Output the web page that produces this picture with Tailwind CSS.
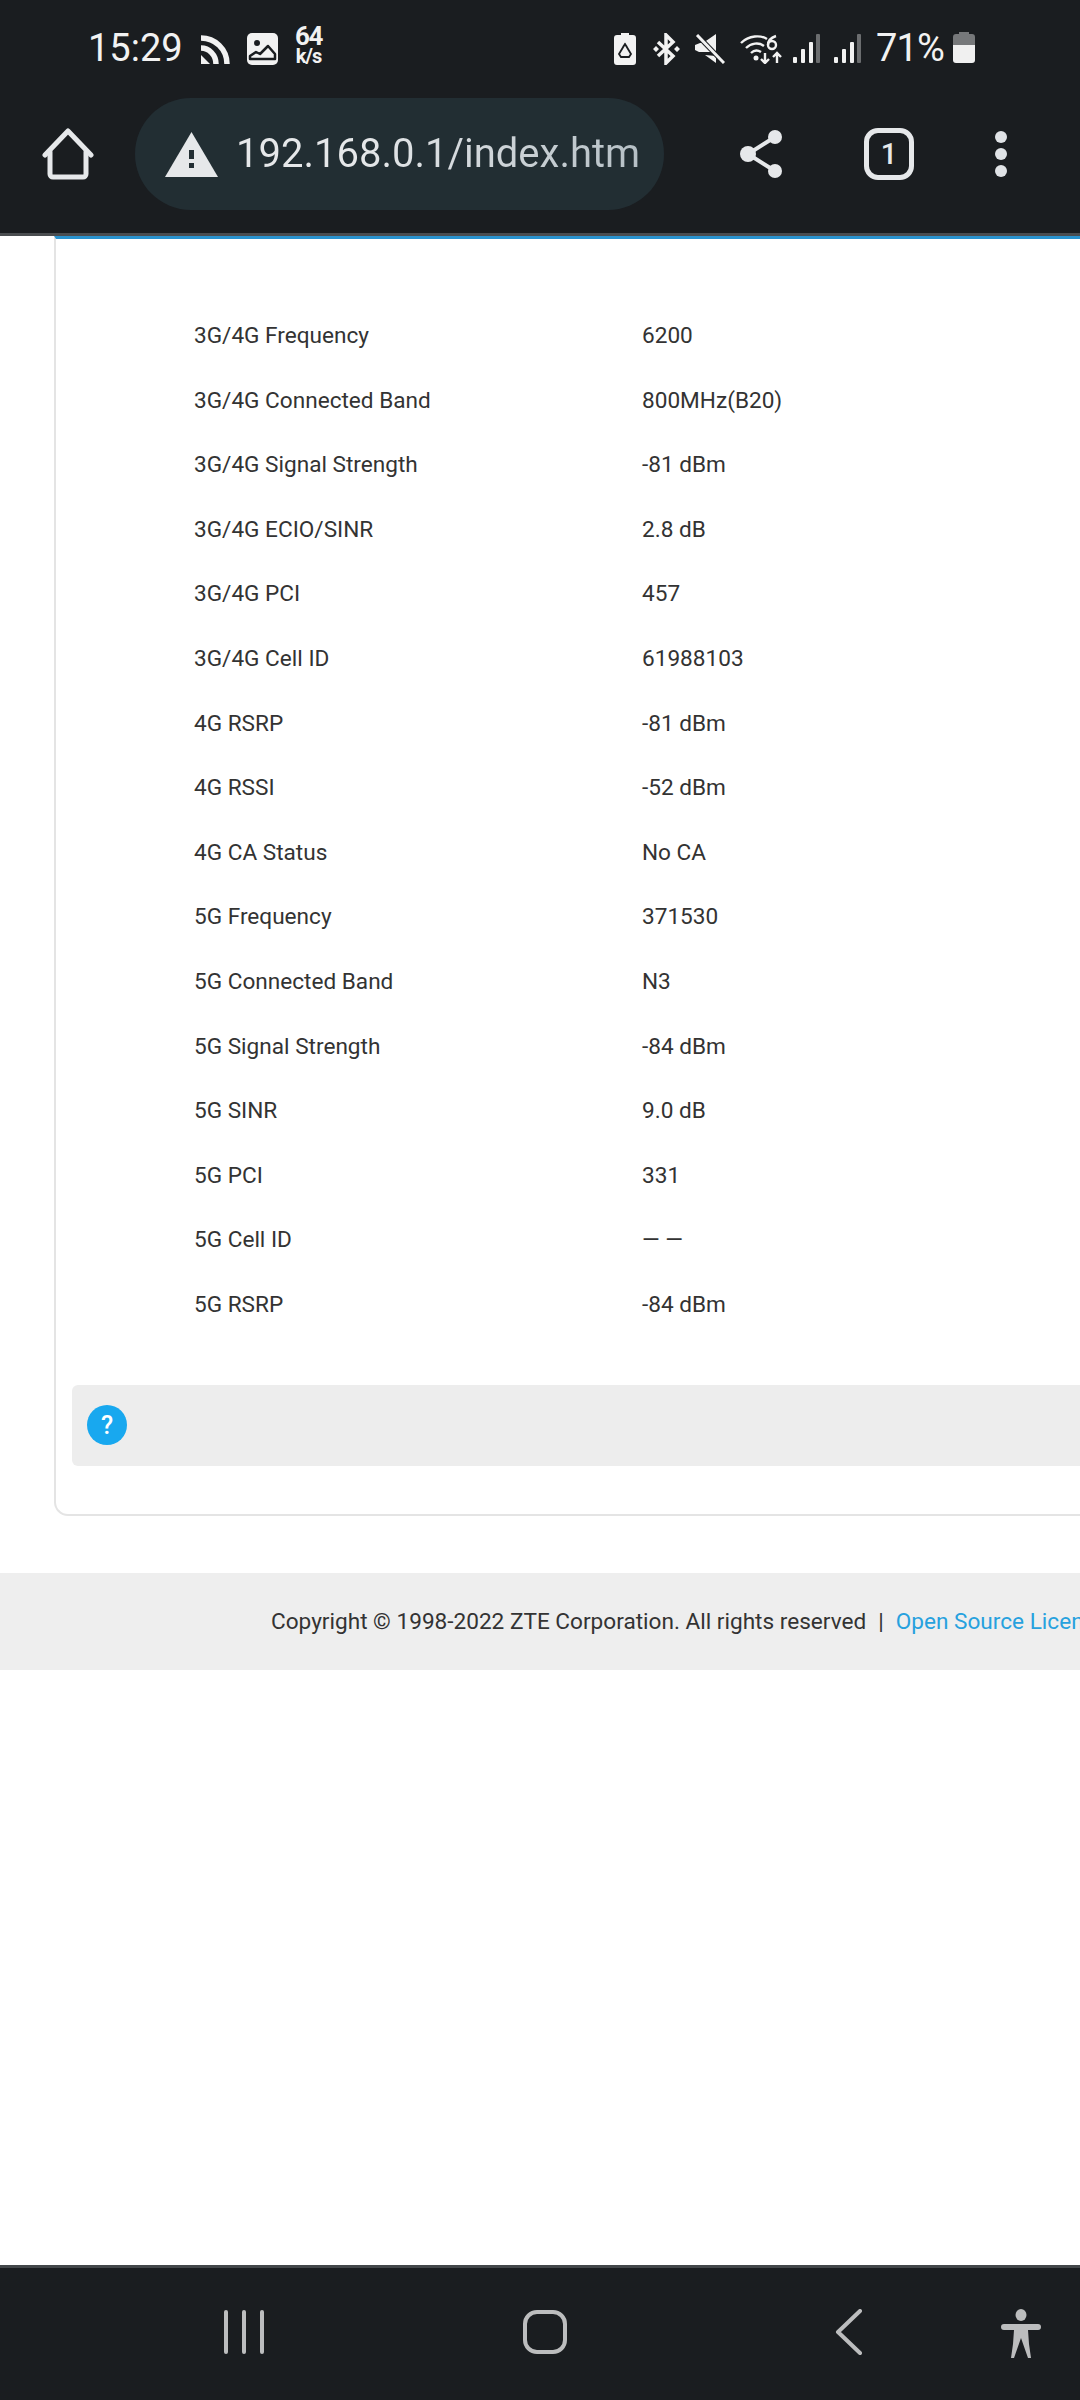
<!DOCTYPE html>
<html lang="en">
<head>
<meta charset="UTF-8">
<title>192.168.0.1</title>
<script src="https://cdn.jsdelivr.net/npm/@tailwindcss/browser@4"></script>
</head>
<body class="bg-white font-['Roboto',sans-serif] overflow-hidden">
<div class="w-[1080px] h-[2400px] flex flex-col overflow-hidden">

  <!-- status bar + browser toolbar -->
  <header class="h-[233px] shrink-0 bg-[#1a1d20] text-white">
    <div class="h-[98px] flex justify-between items-start pl-[88px] pr-[105px] pt-[26px]">
      <div class="flex items-start">
        <span class="text-[38px] leading-[44px] w-[94px] text-[#f2f2f2]">15:29</span>
        <svg class="w-[29px] h-[30px] mt-[8px] ml-[19px]" viewBox="0 0 29 30" fill="none" stroke="#f2f2f2" stroke-width="5.500"><path d="M0 4c14 0 26 11 26 26"/><path d="M0 14c8 0 15 7 15 16"/><path d="M0 21l9 9H0z" fill="#f2f2f2" stroke="none"/></svg>
        <svg class="w-[31px] h-[32px] mt-[7px] ml-[17px]" viewBox="0 0 31 32"><rect width="31" height="32" rx="5" fill="#f2f2f2"/><circle cx="10" cy="10" r="3" fill="#1a1d20"/><path d="M3 26v-3l6-4 4 2 8-8 7 8v5z" fill="none" stroke="#1a1d20" stroke-width="2.500" stroke-linejoin="round"/></svg>
        <div class="ml-[17px] -mt-[1px] flex flex-col items-center w-[27px] text-[#f2f2f2] font-bold">
          <span class="text-[26px] leading-[23px] tracking-[-1.5px]">64</span>
          <span class="text-[20px] leading-[16px] tracking-[-1px]">k/s</span>
        </div>
      </div>
      <div class="flex items-start">
        <svg class="w-[22px] h-[32px] mt-[7px]" viewBox="0 0 22 32"><path d="M7 0h8v2h4a3 3 0 0 1 3 3v24a3 3 0 0 1-3 3H3a3 3 0 0 1-3-3V5a3 3 0 0 1 3-3h4z" fill="#f2f2f2"/><path d="M11 11l-6 10 2 3h3M11 11l6 10-2 3h-2M9 14l2-3 2 3M8 24h6" fill="none" stroke="#1a1d20" stroke-width="1.800"/></svg>
        <svg class="w-[27px] h-[32px] mt-[7px] ml-[17px]" viewBox="0 0 27 32" fill="none" stroke="#f2f2f2" stroke-width="3.500"><path d="M5 9l15 14-7 7V2l7 7L5 23"/><path d="M0 16l3-3 3 3-3 3zM21 16l3-3 3 3-3 3z" fill="#f2f2f2" stroke="none"/></svg>
        <svg class="w-[30px] h-[30px] mt-[8px] ml-[15px]" viewBox="0 0 30 30"><path d="M0 11l5-2h3L21 0v18L4 18 0 16zM10 21l11 1v7z" fill="#f2f2f2"/><path d="M2 1l27 28" stroke="#1a1d20" stroke-width="5"/><path d="M2 1l27 28" stroke="#f2f2f2" stroke-width="3"/></svg>
        <svg class="w-[43px] h-[30px] mt-[8px] ml-[15px]" viewBox="0 0 43 30" fill="none" stroke="#f2f2f2" stroke-width="2.400"><path d="M1 9c8-8 20-8 26-4"/><path d="M6 14c5-5 13-6 18-2"/><path d="M11 19c3-3 7-3 10-1"/><circle cx="16" cy="24" r="2.500" fill="#f2f2f2" stroke="none"/><path d="M25 19v10m-4-4l4 4 4-4M37 29v-10m-4 4l4-4 4 4"/><circle cx="32" cy="11" r="4"/><path d="M36 2c-3 1-8 3-8 9"/></svg>
        <svg class="w-[27px] h-[30px] mt-[8px] ml-[10px]" viewBox="0 0 27 30"><rect y="23" width="4" height="6" rx="1" fill="#f2f2f2"/><rect x="8" y="15" width="4" height="14" rx="1" fill="#f2f2f2"/><rect x="16" y="8" width="4" height="21" rx="1" fill="#f2f2f2"/><rect x="23" width="4" height="29" rx="1" fill="#6b6d6f"/></svg>
        <svg class="w-[27px] h-[30px] mt-[8px] ml-[14px]" viewBox="0 0 27 30"><rect y="23" width="4" height="6" rx="1" fill="#f2f2f2"/><rect x="8" y="15" width="4" height="14" rx="1" fill="#f2f2f2"/><rect x="16" y="8" width="4" height="21" rx="1" fill="#f2f2f2"/><rect x="23" width="4" height="29" rx="1" fill="#6b6d6f"/></svg>
        <span class="text-[38px] leading-[44px] ml-[15px] w-[70px] tracking-[-0.8px] text-[#f2f2f2] whitespace-nowrap">71%</span>
        <svg class="w-[22px] h-[31px] mt-[6px] ml-[7px]" viewBox="0 0 22 31"><path d="M6 0h10v2h3a3 3 0 0 1 3 3v8H0V5a3 3 0 0 1 3-3h3z" fill="#76787a"/><path d="M0 13h22v15a3 3 0 0 1-3 3H3a3 3 0 0 1-3-3z" fill="#f0f0f0"/></svg>
      </div>
    </div>
    <div class="h-[112px] flex items-center pl-[42px]">
      <svg class="w-[52px] h-[52px] shrink-0" viewBox="0 0 52 52" fill="none" stroke="#e6e8ea" stroke-width="5" stroke-linejoin="round" stroke-linecap="round"><path d="M3 27L26 3l23 24"/><path d="M8 24v22a3 3 0 0 0 3 3h30a3 3 0 0 0 3-3V24"/></svg>
      <div class="ml-[41px] w-[529px] h-[112px] shrink-0 rounded-full bg-[#222e33] flex items-center pl-[30px]">
        <svg class="w-[53px] h-[45px] shrink-0" viewBox="0 0 53 45"><path d="M26.500 0L53 45H0z" fill="#e6e8ea"/><path d="M24 18h5v9h-5zM24 31h5v5h-5z" fill="#222e33"/></svg>
        <div class="ml-[18px] w-[403px] overflow-hidden whitespace-nowrap text-[40px] leading-[48px] text-transparent bg-clip-text bg-linear-to-r from-[#e6e8ea] from-30% to-[#b6c0c6]">192.168.0.1/index.html</div>
      </div>
      <svg class="w-[43px] h-[48px] ml-[76px] shrink-0" viewBox="0 0 43 48" fill="#e6e8ea"><circle cx="35" cy="7" r="7"/><circle cx="8" cy="24" r="8"/><circle cx="35" cy="41" r="7"/><path d="M35 7L8 24l27 17" fill="none" stroke="#e6e8ea" stroke-width="4"/></svg>
      <div class="ml-[81px] w-[50px] h-[52px] shrink-0 rounded-[14px] border-[5px] border-[#e6e8ea] flex items-center justify-center text-[#e6e8ea] text-[29px] font-medium leading-none">1</div>
      <div class="ml-[81px] w-[12px] shrink-0 flex flex-col gap-[5px]">
        <span class="w-[12px] h-[12px] rounded-full bg-[#e0e3e6]"></span>
        <span class="w-[12px] h-[12px] rounded-full bg-[#e0e3e6]"></span>
        <span class="w-[12px] h-[12px] rounded-full bg-[#e0e3e6]"></span>
      </div>
    </div>
  </header>
  <div class="h-[3px] shrink-0 bg-[#4a4d50]"></div>

  <!-- page content -->
  <main class="flex-1 flex flex-col text-[#333333]">
    <section class="ml-[54px] w-[1100px] h-[1280px] shrink-0 border-t-[3px] border-t-[#2a93cf] border-l-2 border-b-2 border-l-[#e4e4e4] border-b-[#e4e4e4] rounded-bl-[14px] pt-[65px]">
      <div class="pl-[138px] text-[22.6px] leading-[64.6px]">
        <div class="flex h-[64.6px]"><span class="w-[448px]">3G/4G Frequency</span><span>6200</span></div>
        <div class="flex h-[64.6px]"><span class="w-[448px]">3G/4G Connected Band</span><span>800MHz(B20)</span></div>
        <div class="flex h-[64.6px]"><span class="w-[448px]">3G/4G Signal Strength</span><span>-81 dBm</span></div>
        <div class="flex h-[64.6px]"><span class="w-[448px]">3G/4G ECIO/SINR</span><span>2.8 dB</span></div>
        <div class="flex h-[64.6px]"><span class="w-[448px]">3G/4G PCI</span><span>457</span></div>
        <div class="flex h-[64.6px]"><span class="w-[448px]">3G/4G Cell ID</span><span>61988103</span></div>
        <div class="flex h-[64.6px]"><span class="w-[448px]">4G RSRP</span><span>-81 dBm</span></div>
        <div class="flex h-[64.6px]"><span class="w-[448px]">4G RSSI</span><span>-52 dBm</span></div>
        <div class="flex h-[64.6px]"><span class="w-[448px]">4G CA Status</span><span>No CA</span></div>
        <div class="flex h-[64.6px]"><span class="w-[448px]">5G Frequency</span><span>371530</span></div>
        <div class="flex h-[64.6px]"><span class="w-[448px]">5G Connected Band</span><span>N3</span></div>
        <div class="flex h-[64.6px]"><span class="w-[448px]">5G Signal Strength</span><span>-84 dBm</span></div>
        <div class="flex h-[64.6px]"><span class="w-[448px]">5G SINR</span><span>9.0 dB</span></div>
        <div class="flex h-[64.6px]"><span class="w-[448px]">5G PCI</span><span>331</span></div>
        <div class="flex h-[64.6px]"><span class="w-[448px]">5G Cell ID</span><span>— —</span></div>
        <div class="flex h-[64.6px]"><span class="w-[448px]">5G RSRP</span><span>-84 dBm</span></div>
      </div>
      <div class="mt-[47.4px] ml-[16px] h-[81px] rounded-l-[6px] bg-[#ededed] flex items-center pl-[15px]">
        <span class="w-[40px] h-[40px] rounded-full bg-[#18a8ef] flex items-center justify-center text-white text-[25px] font-medium leading-none">?</span>
      </div>
    </section>
    <footer class="mt-[57px] h-[97px] shrink-0 bg-[#eeeeee] flex items-center pl-[271px] text-[22.6px] whitespace-nowrap overflow-hidden">
      <span>Copyright © 1998-2022 ZTE Corporation. All rights reserved</span>
      <span class="mx-[12px]">|</span>
      <span class="text-[#27a1de]">Open Source Licenses</span>
    </footer>
  </main>

  <!-- android nav bar -->
  <nav class="h-[135px] shrink-0 border-t-[3px] border-[#43474a] bg-[#1a1d20] flex items-start pt-[41px] pl-[224px]">
    <div class="flex gap-[14.5px] mt-[1px]">
      <span class="w-[3.5px] h-[44px] rounded-full bg-[#bcbdbe]"></span>
      <span class="w-[3.5px] h-[44px] rounded-full bg-[#bcbdbe]"></span>
      <span class="w-[3.5px] h-[44px] rounded-full bg-[#bcbdbe]"></span>
    </div>
    <div class="ml-[259.5px] w-[44px] h-[44px] mt-[1px] rounded-[14px] border-[4px] border-[#bcbdbe]"></div>
    <svg class="ml-[268px] w-[28px] h-[46px]" viewBox="0 0 28 46" fill="none" stroke="#bcbdbe" stroke-width="4" stroke-linecap="round" stroke-linejoin="round"><path d="M25 2L3 23l22 21"/></svg>
    <svg class="ml-[138px] w-[40px] h-[50px]" viewBox="0 0 40 50" fill="#bcbdbe"><ellipse cx="20" cy="6" rx="5.500" ry="6"/><path d="M3 15h34a2.500 2.500 0 0 1 0 6H27l1 14 2 14h-3l-7-20-7 20h-3l2-14 1-14H3a2.500 2.500 0 0 1 0-6z"/></svg>
  </nav>
</div>
</body>
</html>
